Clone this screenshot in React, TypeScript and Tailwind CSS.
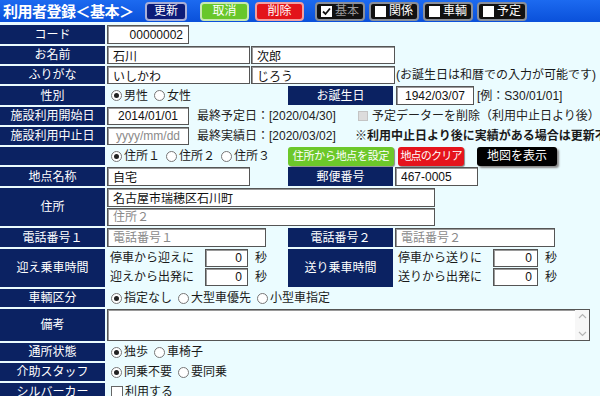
import React from 'react'

type Kids = { children?: React.ReactNode; className?: string }

// navy label cell on the left of each row
function Label({ children, className = '' }: Kids) {
  return (
    <div className={`w-[105px] shrink-0 bg-[#0b2262] text-white text-[12px] flex items-center justify-center ${className}`}>
      {children}
    </div>
  )
}

// navy label cell in the middle column
function SubLabel({ children }: Kids) {
  return (
    <div className="w-[105px] h-full shrink-0 bg-[#0b2262] text-white text-[12px] flex items-center justify-center">
      {children}
    </div>
  )
}

function Field({
  value,
  placeholder,
  className = '',
  pad = 'px-[5px]',
}: {
  value?: string
  placeholder?: string
  className?: string
  pad?: string
}) {
  return (
    <input
      readOnly
      value={value ?? ''}
      placeholder={placeholder}
      className={`h-full shrink-0 bg-white border border-[#555] shadow-[inset_1px_1px_0_#9a9a9a] text-[12px] text-[#111] placeholder:text-[#8a8a8a] outline-none ${pad} ${className}`}
    />
  )
}

function Radio({ label, checked = false }: { label: string; checked?: boolean }) {
  return (
    <span className="flex items-center mr-[6px]">
      <span className="w-[11px] h-[11px] rounded-full border border-[#777] bg-white flex items-center justify-center mr-[2px]">
        {checked && <span className="w-[5px] h-[5px] rounded-full bg-[#222]" />}
      </span>
      <span>{label}</span>
    </span>
  )
}

function HeadButton({ children, className = '' }: Kids) {
  return (
    <div className={`h-[19px] flex items-center justify-center rounded-[4px] border-2 text-[12px] text-white ${className}`}>
      {children}
    </div>
  )
}

function Tab({ label, checked = false }: { label: string; checked?: boolean }) {
  return (
    <div className="h-[19px] w-[50px] flex items-center justify-center gap-[3px] rounded-[4px] bg-[#111] border-2 border-[#8a8f9a] text-[12px]">
      <span className="w-[11px] h-[11px] bg-white flex items-center justify-center">
        {checked && (
          <svg width="9" height="9" viewBox="0 0 9 9">
            <path d="M1 4.5 L3.5 7 L8 1.5" stroke="#111" strokeWidth="1.8" fill="none" />
          </svg>
        )}
      </span>
      <span className={checked ? 'text-[#9a9a9a]' : 'text-white'}>{label}</span>
    </div>
  )
}

export default function App() {
  return (
    <div className="w-[600px] h-[396px] overflow-hidden bg-[#ebfcff] text-[#1a1a1a] text-[12px] leading-none font-['Liberation_Sans','Noto_Sans_CJK_JP',sans-serif]">
      {/* header bar */}
      <div className="h-[22px] flex items-center bg-gradient-to-b from-[#1c6af0] to-[#0a50da]">
        <div className="pl-[3px] text-white font-bold text-[15px] tracking-[-0.5px] w-[145px] whitespace-nowrap">
          利用者登録＜基本＞
        </div>
        <HeadButton className="w-[42px] bg-[#0c1c78] border-[#a9b0d8]">更新</HeadButton>
        <HeadButton className="w-[49px] ml-[13px] bg-[#68c72a] border-[#c8e8b0]">取消</HeadButton>
        <HeadButton className="w-[49px] ml-[6px] bg-[#e3141a] border-[#f2a0a0]">削除</HeadButton>
        <div className="flex gap-[4px] ml-[11px]">
          <Tab label="基本" checked />
          <Tab label="関係" />
          <Tab label="車輌" />
          <Tab label="予定" />
        </div>
      </div>

      <div className="mt-[3px] flex flex-col gap-[2px]">
        {/* コード */}
        <div className="flex h-[19px]">
          <Label>コード</Label>
          <div className="ml-[2px] flex items-center h-full">
            <Field value="00000002" className="w-[82px] text-right" />
          </div>
        </div>

        {/* お名前 */}
        <div className="flex h-[18px]">
          <Label>お名前</Label>
          <div className="ml-[2px] flex items-center h-full">
            <Field value="石川" className="w-[143px]" />
            <Field value="次郎" className="w-[144px] ml-[1px]" />
          </div>
        </div>

        {/* ふりがな */}
        <div className="flex h-[18px]">
          <Label>ふりがな</Label>
          <div className="ml-[2px] flex items-center h-full">
            <Field value="いしかわ" className="w-[143px]" />
            <Field value="じろう" className="w-[144px] ml-[1px]" />
            <span className="ml-[1px] whitespace-nowrap">(お誕生日は和暦での入力が可能です)</span>
          </div>
        </div>

        {/* 性別 / お誕生日 */}
        <div className="flex h-[19px]">
          <Label>性別</Label>
          <div className="ml-[2px] flex items-center h-full">
            <div className="w-[181px] flex items-center pl-[4px]">
              <Radio label="男性" checked />
              <Radio label="女性" />
            </div>
            <SubLabel>お誕生日</SubLabel>
            <Field value="1942/03/07" pad="px-0" className="w-[78px] ml-[3px] text-center" />
            <span className="ml-[3px] whitespace-nowrap">[例：S30/01/01]</span>
          </div>
        </div>

        {/* 施設利用開始日 */}
        <div className="flex h-[18px]">
          <Label>施設利用開始日</Label>
          <div className="ml-[2px] flex items-center h-full">
            <Field value="2014/01/01" pad="px-0" className="w-[82px] text-center" />
            <span className="w-[169px] pl-[8px] whitespace-nowrap text-[#222]">最終予定日：[2020/04/30]</span>
            <span className="w-[10px] h-[10px] bg-[#dcdcdc] border border-[#c4c4c4] mr-[4px]" />
            <span className="whitespace-nowrap text-[#222]">予定データーを削除（利用中止日より後）</span>
          </div>
        </div>

        {/* 施設利用中止日 */}
        <div className="flex h-[18px]">
          <Label>施設利用中止日</Label>
          <div className="ml-[2px] flex items-center h-full">
            <Field placeholder="yyyy/mm/dd" pad="px-0" className="w-[82px] text-center" />
            <span className="w-[166px] pl-[8px] whitespace-nowrap text-[#222]">最終実績日：[2020/03/02]</span>
            <span className="whitespace-nowrap font-bold">※利用中止日より後に実績がある場合は更新不可</span>
          </div>
        </div>

        {/* 住所選択 + ボタン */}
        <div className="flex h-[18px]">
          <Label />
          <div className="ml-[2px] flex items-center h-full">
            <div className="w-[181px] flex items-center pl-[4px]">
              <Radio label="住所１" checked />
              <Radio label="住所２" />
              <Radio label="住所３" />
            </div>
            <div className="w-[106px] h-[19px] rounded-[3px] bg-[#6cc82a] text-white text-[11px] tracking-[-0.3px] flex items-center justify-center shadow-[1px_1px_1px_#8a8a8a] whitespace-nowrap">
              住所から地点を設定
            </div>
            <div className="w-[66px] h-[19px] ml-[4px] rounded-[3px] bg-[#e5141c] text-white text-[11px] tracking-[-0.8px] flex items-center justify-center shadow-[1px_1px_1px_#8a8a8a] whitespace-nowrap">
              地点のクリア
            </div>
            <div className="w-[80px] h-[19px] ml-[13px] rounded-[3px] bg-black text-white flex items-center justify-center shadow-[2px_2px_2px_#8a8a8a] whitespace-nowrap">
              地図を表示
            </div>
          </div>
        </div>

        {/* 地点名称 / 郵便番号 */}
        <div className="flex h-[19px]">
          <Label>地点名称</Label>
          <div className="ml-[2px] flex items-center h-full">
            <div className="w-[181px] h-full flex">
              <Field value="自宅" className="w-[143px]" />
            </div>
            <SubLabel>郵便番号</SubLabel>
            <Field value="467-0005" className="w-[83px] ml-[2px]" />
          </div>
        </div>

        {/* 住所 */}
        <div className="flex h-[38px]">
          <Label>住所</Label>
          <div className="ml-[2px] flex flex-col gap-[1px] h-full">
            <div className="h-[19px] flex">
              <Field value="名古屋市瑞穂区石川町" className="w-[328px]" />
            </div>
            <div className="h-[18px] flex">
              <Field placeholder="住所２" className="w-[328px]" />
            </div>
          </div>
        </div>

        {/* 電話番号 */}
        <div className="flex h-[19px]">
          <Label>電話番号１</Label>
          <div className="ml-[2px] flex items-center h-full">
            <div className="w-[181px] h-full flex">
              <Field placeholder="電話番号１" className="w-[159px]" />
            </div>
            <SubLabel>電話番号２</SubLabel>
            <Field placeholder="電話番号２" className="w-[160px] ml-[2px]" />
          </div>
        </div>

        {/* 乗車時間 */}
        <div className="flex h-[38px]">
          <Label>迎え乗車時間</Label>
          <div className="ml-[2px] flex items-center h-full">
            <div className="w-[181px] h-full flex flex-col gap-[1px]">
              <div className="h-[18px] flex items-center">
                <span className="w-[98px] pl-[3px]">停車から迎えに</span>
                <Field value="0" className="w-[43px] text-right" />
                <span className="ml-[7px]">秒</span>
              </div>
              <div className="h-[18px] flex items-center">
                <span className="w-[98px] pl-[3px]">迎えから出発に</span>
                <Field value="0" className="w-[43px] text-right" />
                <span className="ml-[7px]">秒</span>
              </div>
            </div>
            <SubLabel>送り乗車時間</SubLabel>
            <div className="h-full flex flex-col gap-[1px]">
              <div className="h-[18px] flex items-center">
                <span className="w-[100px] pl-[5px]">停車から送りに</span>
                <Field value="0" className="w-[45px] text-right" />
                <span className="ml-[7px]">秒</span>
              </div>
              <div className="h-[18px] flex items-center">
                <span className="w-[100px] pl-[5px]">送りから出発に</span>
                <Field value="0" className="w-[45px] text-right" />
                <span className="ml-[7px]">秒</span>
              </div>
            </div>
          </div>
        </div>

        {/* 車輌区分 */}
        <div className="flex h-[18px]">
          <Label>車輌区分</Label>
          <div className="ml-[2px] flex items-center h-full pl-[4px]">
            <Radio label="指定なし" checked />
            <Radio label="大型車優先" />
            <Radio label="小型車指定" />
          </div>
        </div>

        {/* 備考 */}
        <div className="flex h-[32px]">
          <Label>備考</Label>
          <div className="ml-[2px] h-full w-[483px] flex bg-white border border-[#555] shadow-[inset_1px_1px_0_#9a9a9a]">
            <div className="flex-1" />
            <div className="w-[14px] flex flex-col items-center justify-between py-[3px] bg-[#f7f7f7]">
              <svg width="9" height="6" viewBox="0 0 9 6">
                <path d="M1 5 L4.5 1.5 L8 5" stroke="#b5b5b5" strokeWidth="1.2" fill="none" />
              </svg>
              <svg width="9" height="6" viewBox="0 0 9 6">
                <path d="M1 1 L4.5 4.5 L8 1" stroke="#b5b5b5" strokeWidth="1.2" fill="none" />
              </svg>
            </div>
          </div>
        </div>

        {/* 通所状態 */}
        <div className="flex h-[18px]">
          <Label>通所状態</Label>
          <div className="ml-[2px] flex items-center h-full pl-[4px]">
            <Radio label="独歩" checked />
            <Radio label="車椅子" />
          </div>
        </div>

        {/* 介助スタッフ */}
        <div className="flex h-[18px]">
          <Label>介助スタッフ</Label>
          <div className="ml-[2px] flex items-center h-full pl-[4px]">
            <Radio label="同乗不要" checked />
            <Radio label="要同乗" />
          </div>
        </div>

        {/* シルバーカー */}
        <div className="flex h-[18px]">
          <Label>シルバーカー</Label>
          <div className="ml-[2px] flex items-center h-full pl-[4px]">
            <span className="w-[12px] h-[12px] bg-white border border-[#666] mr-[2px]" />
            <span>利用する</span>
          </div>
        </div>
      </div>
    </div>
  )
}
